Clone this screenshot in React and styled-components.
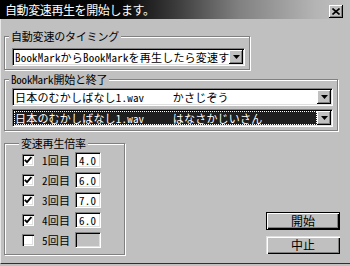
import React from 'react';
import styled, { createGlobalStyle } from 'styled-components';

const Global = createGlobalStyle`
  html, body { margin: 0; padding: 0; background: #c0c0c0; }
  body {
    font-family: "Noto Sans Mono CJK JP", "Noto Sans CJK JP", monospace;
    font-size: 11px;
    color: #000;
  }
  * { box-sizing: border-box; }
`;

const Window = styled.div`
  width: 350px;
  height: 266px;
  background: #c0c0c0;
  display: flex;
  flex-direction: column;
  overflow: hidden;
`;

const TitleBar = styled.div`
  height: 19px;
  flex: none;
  display: flex;
  align-items: center;
  justify-content: space-between;
  padding: 0 7px 0 5px;
  background: linear-gradient(to right, #000 0%, #080808 35%, #3a3a3a 50%, #808080 68%, #b4b4b4 90%, #c0c0c0 100%);
  color: #fff;
  font-family: "Noto Sans CJK JP", sans-serif;
  font-size: 12px;
  letter-spacing: -0.4px;
`;

const CloseButton = styled.div`
  width: 14px;
  height: 13px;
  margin-top: 4px;
  background: #c0c0c0;
  display: flex;
  align-items: center;
  justify-content: center;
  box-shadow: inset -1px -1px #000, inset 1px 1px #fff, inset -2px -2px #808080;
`;

const Body = styled.div`
  flex: none;
  height: 245px;
  padding: 10px 0 0 4px;
  border-bottom: 1px solid #303030;
  border-left: 1px solid #e8e8e8;
  margin-left: 0;
`;

const Group = styled.fieldset`
  margin: ${p => p.$top || 0}px 0 0 -1px;
  padding: ${p => p.$pad};
  width: ${p => p.$width}px;
  min-width: 0;
  border: 1px solid #808080;
  box-shadow: inset 1px 1px #fff, 1px 1px #fff;
`;

const Legend = styled.legend`
  margin-left: -3px;
  padding: 0 2px;
  line-height: 14px;
  background: #c0c0c0;
  letter-spacing: -0.2px;
`;

const Select = styled.div`
  width: ${p => p.$width}px;
  height: 18px;
  display: flex;
  background: ${p => (p.$active ? '#1e1e1e' : '#fff')};
  color: ${p => (p.$active ? '#fff' : '#000')};
  border: 1px solid;
  border-color: #808080 #fff #fff #808080;
  box-shadow: inset 1px 1px #000, inset -1px -1px #dfdfdf;
  padding: 1px 1px 1px 1px;
  & + & { margin-top: 3px; }
`;

const SelectText = styled.div`
  flex: 1;
  min-width: 0;
  overflow: hidden;
  white-space: pre;
  line-height: 14px;
  padding-left: 1px;
  letter-spacing: 0.2px;
  outline: ${p => (p.$focus ? '1px dotted #fff' : 'none')};
  outline-offset: -1px;
`;

const DropButton = styled.div`
  flex: none;
  width: 14px;
  height: 14px;
  background: #c0c0c0;
  display: flex;
  align-items: center;
  justify-content: center;
  box-shadow: inset -1px -1px #000, inset 1px 1px #fff, inset -2px -2px #808080;
`;

const Lower = styled.div`
  display: flex;
  align-items: flex-start;
`;

const Rows = styled.div`
  display: flex;
  flex-direction: column;
  gap: 4px;
`;

const Row = styled.div`
  display: flex;
  align-items: center;
  height: 16px;
`;

const Check = styled.div`
  width: 12px;
  height: 12px;
  margin-right: 8px;
  background: #fff;
  display: flex;
  align-items: center;
  justify-content: center;
  box-shadow: inset 1px 1px #808080, inset 2px 2px #000, inset -1px -1px #fff, inset -2px -2px #dfdfdf;
`;

const RowLabel = styled.span`
  width: 33px;
  line-height: 14px;
  letter-spacing: 0.3px;
`;

const Field = styled.div`
  width: 26px;
  height: 16px;
  padding: 1px 0 0 3px;
  line-height: 13px;
  background: ${p => (p.$disabled ? '#c0c0c0' : '#fff')};
  border: 1px solid;
  border-color: #808080 #fff #fff #808080;
  box-shadow: inset 1px 1px #000, inset -1px -1px #dfdfdf;
  letter-spacing: 0.3px;
`;

const Buttons = styled.div`
  margin: 81px 10px 0 auto;
  display: flex;
  flex-direction: column;
  gap: 6px;
`;

const Button = styled.div`
  width: 74px;
  height: 18px;
  display: flex;
  align-items: center;
  justify-content: center;
  background: #c0c0c0;
  line-height: 14px;
  font-family: "Noto Sans CJK JP", sans-serif;
  font-size: 12px;
  border: 1px solid ${p => (p.$default ? '#000' : 'transparent')};
  box-shadow: ${p =>
    p.$default
      ? 'inset 1px 1px #fff, inset -1px -1px #000, inset -2px -2px #808080'
      : 'inset 1px 1px #fff, inset -1px -1px #000, inset -2px -2px #808080'};
  ${p => !p.$default && 'border: none; box-shadow: inset 1px 1px #dfdfdf, inset 2px 2px #fff, inset -1px -1px #000, inset -2px -2px #808080;'}
`;

const Arrow = () => (
  <svg width="7" height="5" viewBox="0 0 7 5">
    <path d="M0 0h7L3.5 4z" fill="#000" />
  </svg>
);

const Tick = () => (
  <svg width="8" height="8" viewBox="0 0 8 8">
    <path d="M0.8 3.8 L3 6.2 L7.4 1" fill="none" stroke="#000" strokeWidth="1.8" />
  </svg>
);

const Cross = () => (
  <svg width="8" height="7" viewBox="0 0 8 7">
    <path d="M0.5 0.5 L7.5 6.5 M7.5 0.5 L0.5 6.5" stroke="#000" strokeWidth="1.6" />
  </svg>
);

const rates = [
  { n: 1, v: '4.0', on: true },
  { n: 2, v: '6.0', on: true },
  { n: 3, v: '7.0', on: true },
  { n: 4, v: '6.0', on: true },
  { n: 5, v: '', on: false },
];

export default function App() {
  return (
    <Window>
      <Global />
      <TitleBar>
        <span>自動変速再生を開始します。</span>
        <CloseButton><Cross /></CloseButton>
      </TitleBar>
      <Body>
        <Group $width={246} $pad="5px 0 3px 7px">
          <Legend>自動変速のタイミング</Legend>
          <Select $width={233}>
            <SelectText>BookMarkからBookMarkを再生したら変速す</SelectText>
            <DropButton><Arrow /></DropButton>
          </Select>
        </Group>
        <Group $width={334} $top={2} $pad="2px 0 3px 7px">
          <Legend>BookMark開始と終了</Legend>
          <Select $width={321}>
            <SelectText>{'日本のむかしばなし1.wav     かさじぞう'}</SelectText>
            <DropButton><Arrow /></DropButton>
          </Select>
          <Select $width={321} $active>
            <SelectText $focus>{'日本のむかしばなし1.wav     はなさかじいさん'}</SelectText>
            <DropButton><Arrow /></DropButton>
          </Select>
        </Group>
        <Lower>
          <Group $width={121} $top={5} $pad="2px 0 6px 17px">
            <Legend>変速再生倍率</Legend>
            <Rows>
              {rates.map(r => (
                <Row key={r.n}>
                  <Check>{r.on && <Tick />}</Check>
                  <RowLabel>{r.n}回目</RowLabel>
                  <Field $disabled={!r.on}>{r.v}</Field>
                </Row>
              ))}
            </Rows>
          </Group>
          <Buttons>
            <Button $default>開始</Button>
            <Button>中止</Button>
          </Buttons>
        </Lower>
      </Body>
    </Window>
  );
}
